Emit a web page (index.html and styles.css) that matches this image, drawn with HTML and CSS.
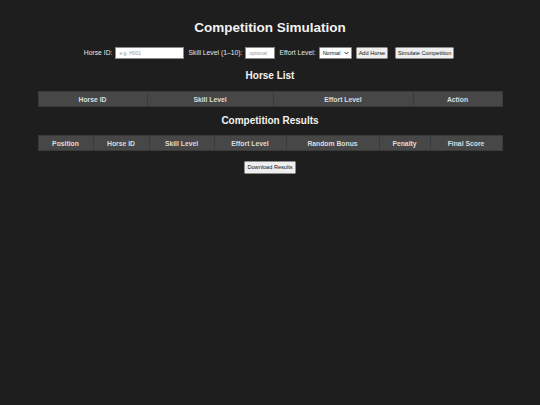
FILE: index.html
```html
<!DOCTYPE html>
<html>
<head>
<meta charset="utf-8">
<title>Competition Simulation</title>
<link rel="stylesheet" href="styles.css">
</head>
<body>
<div class="page">
  <h1 class="title">Competition Simulation</h1>
  <div class="form-row">
    <label class="lbl" for="hid">Horse ID:</label>
    <input class="inp inp-id" id="hid" type="text" placeholder="e.g. H001">
    <label class="lbl" for="skill">Skill Level (1–10):</label>
    <input class="inp inp-skill" id="skill" type="text" placeholder="optional">
    <label class="lbl" for="effort">Effort Level:</label>
    <span class="sel">Normal<svg class="chev" viewBox="0 0 8 6" width="5" height="4"><path d="M1 1.5 L4 4.5 L7 1.5" fill="none" stroke="#222" stroke-width="1.6"/></svg></span>
    <button class="btn">Add Horse</button>
    <button class="btn btn-sim">Simulate Competition</button>
  </div>

  <h2 class="sub">Horse List</h2>
  <table class="tbl">
    <tr>
      <th style="width:108px">Horse ID</th>
      <th style="width:125px">Skill Level</th>
      <th style="width:139px">Effort Level</th>
      <th>Action</th>
    </tr>
  </table>

  <h2 class="sub sub2">Competition Results</h2>
  <table class="tbl tbl2">
    <tr>
      <th style="width:54px">Position</th>
      <th style="width:55px">Horse ID</th>
      <th style="width:64px">Skill Level</th>
      <th style="width:71px">Effort Level</th>
      <th style="width:92px">Random Bonus</th>
      <th style="width:50px">Penalty</th>
      <th>Final Score</th>
    </tr>
  </table>

  <div class="dl-row">
    <button class="btn btn-dl">Download Results</button>
  </div>
</div>
</body>
</html>
```

FILE: styles.css
```css
html, body {
  margin: 0;
  padding: 0;
  background: #1e1e1e;
  width: 540px;
  height: 405px;
  overflow: hidden;
}
.page {
  font-family: "Liberation Sans", Arial, sans-serif;
  color: #e6e6e6;
  padding-top: 20px;
}
.title {
  margin: 0;
  font-size: 13.5px;
  line-height: 16px;
  font-weight: bold;
  text-align: center;
  color: #f2f2f2;
}
.form-row {
  margin-top: 11px;
  height: 12px;
  display: flex;
  justify-content: center;
  align-items: center;
  gap: 4px;
  padding-right: 2px;
}
.lbl {
  font-size: 6.8px;
  line-height: 12px;
  color: #e4e4e4;
  margin-right: -1px;
}
.inp {
  box-sizing: border-box;
  height: 12px;
  border: 1px solid #8a8a8a;
  background: #fff;
  font-family: "Liberation Sans", Arial, sans-serif;
  font-size: 5px;
  padding: 0 3px;
  margin: 0;
  outline: none;
}
.inp::placeholder { color: #9a9a9a; }
.inp-id { width: 69px; }
.inp-skill { width: 30px; }
.sel {
  box-sizing: border-box;
  height: 12px;
  width: 33px;
  background: #fff;
  border: 1px solid #8a8a8a;
  border-radius: 1px;
  font-size: 5.5px;
  color: #111;
  display: flex;
  align-items: center;
  justify-content: space-between;
  padding: 0 2px 0 3px;
}
.chev { display: block; }
.btn {
  box-sizing: border-box;
  height: 12px;
  margin: 0;
  padding: 0 2px;
  background: #efefef;
  border: 1px solid #8d8d8d;
  border-radius: 1.5px;
  font-family: "Liberation Sans", Arial, sans-serif;
  font-size: 5.6px;
  color: #111;
  line-height: 10px;
}
.btn-sim { margin-left: 3px; }
.sub {
  margin: 11px 0 0;
  font-size: 10px;
  line-height: 12px;
  font-weight: bold;
  text-align: center;
  color: #f2f2f2;
}
.sub2 { margin-top: 8px; }
.tbl {
  width: 465px;
  margin: 9px auto 0;
  border-collapse: collapse;
  table-layout: fixed;
}
.tbl2 { margin-top: 8px; }
.tbl th {
  background: #474747;
  border: 1px solid #3a3a3a;
  height: 14px;
  padding: 0;
  font-size: 6.8px;
  font-weight: bold;
  color: #dcdcdc;
  text-align: center;
}
.dl-row {
  margin-top: 10px;
  display: flex;
  justify-content: center;
}
.btn-dl { width: 52px; height: 12.5px; padding: 0; }
```
